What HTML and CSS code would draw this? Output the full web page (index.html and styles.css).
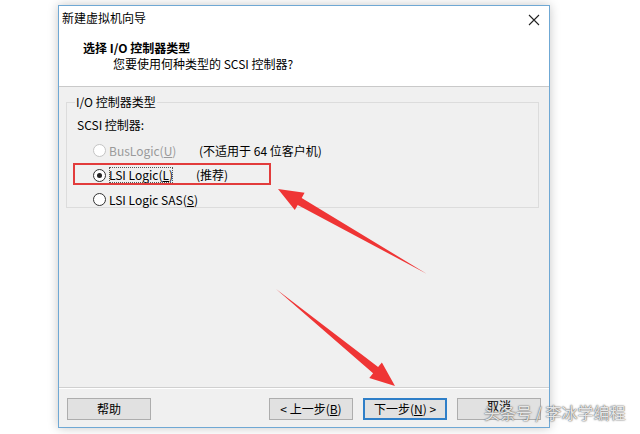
FILE: index.html
```html
<!DOCTYPE html>
<html lang="zh-CN">
<head>
<meta charset="utf-8">
<link rel="stylesheet" href="styles.css">
</head>
<body>
<div class="window">
  <div class="header">
    <div class="titlebar">
      <span class="title">新建虚拟机向导</span>
      <svg class="close" width="12" height="12" viewBox="0 0 12 12"><path d="M1 1L11 11M11 1L1 11" stroke="#222" stroke-width="1.1"/></svg>
    </div>
    <div class="heading">选择 I/O 控制器类型</div>
    <div class="subheading">您要使用何种类型的 SCSI 控制器?</div>
  </div>
  <div class="body">
    <fieldset class="group">
      <legend>I/O 控制器类型</legend>
      <div class="label">SCSI 控制器:</div>
      <div class="options">
        <div class="opt disabled"><span class="radio"></span><span class="name">BusLogic(<u>U</u>)</span><span class="note">(不适用于 64 位客户机)</span></div>
        <div class="opt"><span class="radio checked"></span><span class="name focus">LSI Logic(<u>L</u>)</span><span class="note">(推荐)</span></div>
        <div class="opt"><span class="radio"></span><span class="name">LSI Logic SAS(<u>S</u>)</span></div>
      </div>
    </fieldset>
  </div>
  <div class="footer">
    <button class="btn">帮助</button>
    <span class="spacer"></span>
    <button class="btn">&lt; 上一步(<u>B</u>)</button>
    <button class="btn default">下一步(<u>N</u>) &gt;</button>
    <button class="btn cancel">取消</button>
  </div>
</div>
<div class="highlight"></div>
<svg class="arrows" width="640" height="434" viewBox="0 0 640 434">
  <polygon fill="#ef3535" points="278,189 304.6,192.7 301.7,197.9 427,274 297.7,204.9 294.8,210.1"/>
  <polygon fill="#ef3535" points="276,289 378.1,367.1 381.9,362.5 395,386 369.3,377.9 373.1,373.3"/>
</svg>
<div class="watermark">头条号 / 李冰学编程</div>
</body>
</html>
```
FILE: styles.css
```css
html, body {
  margin: 0;
  padding: 0;
  background: #fff;
}
body {
  width: 640px;
  height: 434px;
  overflow: hidden;
  position: relative;
  font-family: "Noto Sans CJK SC", "DejaVu Sans", sans-serif;
  font-size: 12px;
  color: #000;
}
.window {
  margin: 5px 0 0 58px;
  width: 490px;
  height: 421px;
  border: 1px solid #6fa8d4;
  background: #f0f0f0;
  display: flex;
  flex-direction: column;
  box-shadow: 0 0 10px rgba(0, 0, 0, 0.22);
}
.header {
  background: #fff;
  height: 81px;
  border-bottom: 1px solid #c9c9c9;
  padding: 2px 9px 0 3px;
  box-sizing: border-box;
}
.titlebar {
  display: flex;
  justify-content: space-between;
  align-items: center;
  height: 20px;
  line-height: 16px;
}
.close {
  margin-top: 4px;
}
.heading {
  margin: 12px 0 0 21px;
  font-weight: bold;
  line-height: 16px;
}
.subheading {
  margin: 0 0 0 51px;
  line-height: 16px;
}
.body {
  flex: 1;
  padding: 7px 10px 0 7px;
  border-bottom: 1px solid #d0d0d0;
  box-shadow: 0 1px 0 #fff;
}
.group {
  margin: 0;
  height: 114px;
  box-sizing: border-box;
  border: 1px solid #dcdcdc;
  padding: 7px 10px 0 10px;
}
.group legend {
  padding: 0 1px;
  margin-left: -2px;
  line-height: 16px;
}
.label {
  line-height: 16px;
}
.options {
  margin-top: 9px;
  padding-left: 16px;
  display: flex;
  flex-direction: column;
  gap: 7.5px;
}
.opt {
  display: flex;
  align-items: center;
  height: 17px;
  line-height: 16px;
}
.radio {
  width: 11px;
  height: 11px;
  border: 1px solid #333;
  border-radius: 50%;
  background: #fff;
  margin-right: 3px;
  position: relative;
  box-sizing: content-box;
}
.radio.checked::after {
  content: "";
  position: absolute;
  left: 3px;
  top: 3px;
  width: 5px;
  height: 5px;
  border-radius: 50%;
  background: #222;
}
.disabled .radio {
  border-color: #c4c4c4;
}
.disabled .name {
  color: #9a9a9a;
}
.name {
  width: 90px;
}
.name.focus {
  outline: 1px dotted #555;
  outline-offset: -1px;
  width: auto;
  margin-right: 23px;
}
.footer {
  height: 39px;
  display: flex;
  align-items: flex-start;
  padding: 10px 8px 0 8px;
  box-sizing: border-box;
  gap: 10px;
}
.spacer {
  flex: 1;
}
.btn {
  width: 84px;
  height: 22px;
  font-family: inherit;
  font-size: 12px;
  line-height: 16px;
  background: #e1e1e1;
  border: 1px solid #adadad;
  padding: 0;
  color: #000;
}
.btn.cancel {
  line-height: 12px;
  padding-bottom: 6px;
}
.btn.default {
  border: 2px solid #2f7fc8;
}
.highlight {
  position: absolute;
  left: 73px;
  top: 163px;
  width: 198px;
  height: 22px;
  border: 2px solid #e23c3c;
  box-sizing: border-box;
}
.arrows {
  position: absolute;
  left: 0;
  top: 0;
}
.watermark {
  position: absolute;
  left: 484px;
  top: 403px;
  font-size: 16px;
  line-height: 18px;
  color: rgba(255, 255, 255, 0.85);
  text-shadow: 0 0 1px #555, 0 0 2px #666;
}
```
